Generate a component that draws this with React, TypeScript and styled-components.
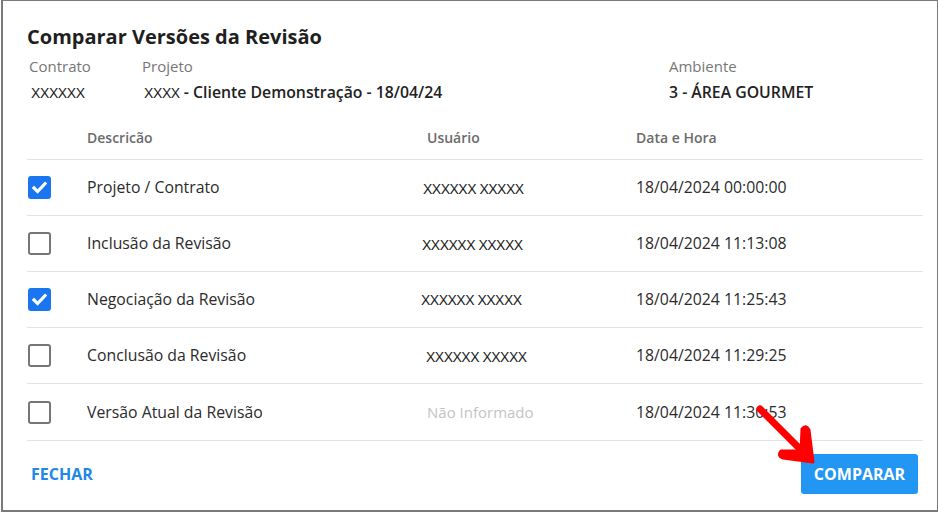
import React, { useState } from "react";
import styled, { createGlobalStyle } from "styled-components";

type Revision = {
    id: number;
    descricao: string;
    usuario?: string;
    dataHora: string;
    shift: number;
};

const revisions: Revision[] = [
    { id: 1, descricao: "Projeto / Contrato", usuario: "XXXXXX XXXXX", dataHora: "18/04/2024 00:00:00", shift: -4 },
    { id: 2, descricao: "Inclusão da Revisão", usuario: "XXXXXX XXXXX", dataHora: "18/04/2024 11:13:08", shift: -5 },
    { id: 3, descricao: "Negociação da Revisão", usuario: "XXXXXX XXXXX", dataHora: "18/04/2024 11:25:43", shift: -6 },
    { id: 4, descricao: "Conclusão da Revisão", usuario: "XXXXXX XXXXX", dataHora: "18/04/2024 11:29:25", shift: -1 },
    { id: 5, descricao: "Versão Atual da Revisão", dataHora: "18/04/2024 11:30:53", shift: 0 },
];

const App = () => {
    const [selected, setSelected] = useState<number[]>([1, 3]);

    const toggle = (id: number) =>
        setSelected((prev) =>
            prev.includes(id) ? prev.filter((x) => x !== id) : [...prev, id]
        );

    return (
        <>
            <GlobalStyle />
            <Frame>
                <Title>Comparar Versões da Revisão</Title>
                <InfoGrid>
                    <InfoLabel>Contrato</InfoLabel>
                    <InfoLabel>Projeto</InfoLabel>
                    <InfoLabel>Ambiente</InfoLabel>
                    <InfoValue>
                        <Masked>XXXXXX</Masked>
                    </InfoValue>
                    <InfoValue>
                        <Masked>XXXX</Masked> - Cliente Demonstração - 18/04/24
                    </InfoValue>
                    <InfoValue>3 - ÁREA GOURMET</InfoValue>
                </InfoGrid>

                <Table>
                    <HeadRow>
                        <span />
                        <HeadCell>Descricão</HeadCell>
                        <HeadCell>Usuário</HeadCell>
                        <HeadCell>Data e Hora</HeadCell>
                    </HeadRow>
                    {revisions.map((r) => {
                        const checked = selected.includes(r.id);
                        return (
                            <Row key={r.id}>
                                <CheckBox
                                    $checked={checked}
                                    onClick={() => toggle(r.id)}
                                >
                                    {checked && (
                                        <svg width="17" height="17" viewBox="0 0 16 16">
                                            <path
                                                d="M2.8 8.4l3.4 3.4 7-7.4"
                                                fill="none"
                                                stroke="#fff"
                                                strokeWidth="3"
                                                strokeLinecap="square"
                                            />
                                        </svg>
                                    )}
                                </CheckBox>
                                <Cell>{r.descricao}</Cell>
                                {r.usuario ? (
                                    <UserCell $shift={r.shift}>{r.usuario}</UserCell>
                                ) : (
                                    <EmptyCell>Não Informado</EmptyCell>
                                )}
                                <Cell>{r.dataHora}</Cell>
                            </Row>
                        );
                    })}
                </Table>

                <Footer>
                    <TextButton>FECHAR</TextButton>
                    <PrimaryButton>COMPARAR</PrimaryButton>
                </Footer>

                <Arrow width="70" height="70" viewBox="0 0 70 70">
                    <path
                        d="M6 6 L52 52"
                        stroke="#f00"
                        strokeWidth="7"
                        strokeLinecap="round"
                        fill="none"
                    />
                    <path
                        d="M59 59 L29 55 Q23 53 27 48 L47 48 L48 26 Q52 21 55 27 Z"
                        fill="#f00"
                        stroke="#f00"
                        strokeWidth="3"
                        strokeLinejoin="round"
                    />
                </Arrow>
            </Frame>
        </>
    );
};

const GlobalStyle = createGlobalStyle`
    body {
        margin: 0;
        background: #fff;
        font-family: "Open Sans", "Noto Sans", sans-serif;
        color: #222;
    }
`;

const Frame = styled.div`
    position: relative;
    box-sizing: border-box;
    width: 937px;
    height: 512px;
    margin-left: 1px;
    border: 1px solid #7a7a7a;
    border-width: 1px 1px 2px 2px;
    padding: 20px 13px 0 24px;
    background: #fff;
`;

const Title = styled.h2`
    margin: 0;
    font-size: 20px;
    font-weight: 700;
    line-height: 32px;
    color: #1f1f1f;
`;

const InfoGrid = styled.div`
    display: grid;
    grid-template-columns: 113px 527px 1fr;
    padding-left: 2px;
    margin-top: 1px;
`;

const InfoLabel = styled.div`
    font-size: 15px;
    line-height: 24px;
    color: #777;
`;

const InfoValue = styled.div`
    font-size: 15.8px;
    font-weight: 600;
    line-height: 28px;
    color: #222;
`;

const Masked = styled.span`
    font-family: "Liberation Sans", Arial, sans-serif;
    font-size: 14px;
    font-weight: 400;
    letter-spacing: -0.4px;
    margin-left: 2px;
`;

const Table = styled.div`
    margin-top: 10px;
    width: 896px;
`;

const columns = "60px 340px 209px 1fr";

const HeadRow = styled.div`
    display: grid;
    grid-template-columns: ${columns};
    align-items: center;
    height: 40px;
    border-bottom: 1px solid #e2e2e2;
    padding-bottom: 2px;
`;

const HeadCell = styled.div`
    font-size: 14px;
    font-weight: 600;
    color: #6b6b6b;
`;

const Row = styled.div`
    display: grid;
    grid-template-columns: ${columns};
    align-items: center;
    height: 55px;
    border-bottom: 1px solid #e2e2e2;

    &:last-child {
        height: 56px;
    }
`;

const CheckBox = styled.div<{ $checked: boolean }>`
    box-sizing: border-box;
    width: 23px;
    height: 23px;
    margin-left: 1px;
    border-radius: 3px;
    display: flex;
    align-items: center;
    justify-content: center;
    cursor: pointer;
    background: ${({ $checked }) => ($checked ? "#1a76f0" : "#fff")};
    border: 2px solid ${({ $checked }) => ($checked ? "#1a76f0" : "#767676")};
`;

const Cell = styled.div`
    font-size: 15.8px;
    color: #2b2b2b;
    margin-top: -1px;
`;

const UserCell = styled.div<{ $shift: number }>`
    font-family: "Liberation Sans", Arial, sans-serif;
    font-size: 14px;
    letter-spacing: -0.5px;
    color: #222;
    margin-left: ${({ $shift }) => $shift}px;
    padding-top: ${({ $shift }) => ($shift < -5 ? 0 : 3)}px;
`;

const EmptyCell = styled.div`
    font-size: 15px;
    color: #c4c4c4;
`;

const Footer = styled.div`
    display: flex;
    align-items: center;
    justify-content: space-between;
    width: 891px;
    margin-top: 13px;
`;

const TextButton = styled.button`
    border: none;
    background: none;
    padding: 0 4px;
    font-family: inherit;
    font-size: 16px;
    font-weight: 700;
    color: #2188e8;
    cursor: pointer;
`;

const PrimaryButton = styled.button`
    border: none;
    border-radius: 3px;
    background: #2196f3;
    color: #fff;
    font-family: inherit;
    font-size: 16px;
    font-weight: 700;
    width: 117px;
    height: 40px;
    cursor: pointer;
`;

const Arrow = styled.svg`
    position: absolute;
    left: 751px;
    top: 402px;
    pointer-events: none;
`;

export default App;
